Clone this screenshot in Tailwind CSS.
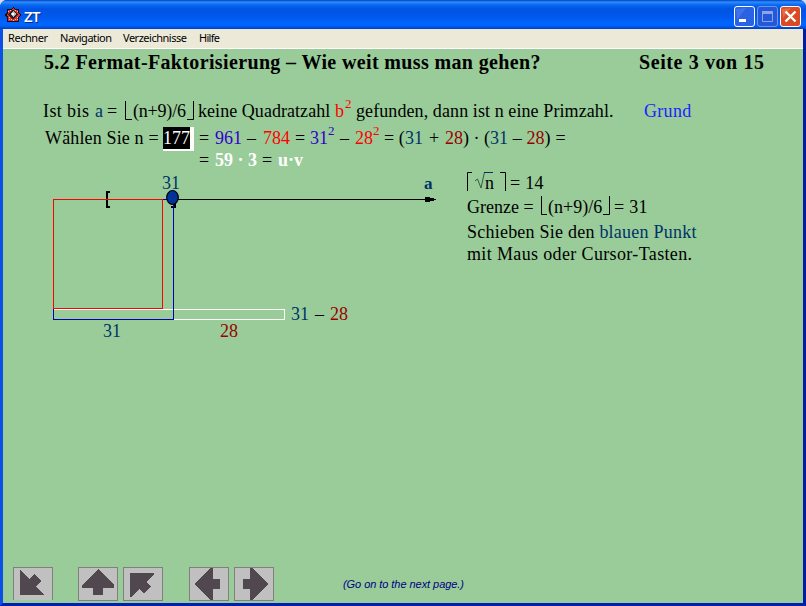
<!DOCTYPE html>
<html lang="de">
<head>
<meta charset="utf-8">
<title>ZT</title>
<script src="https://cdn.jsdelivr.net/npm/@tailwindcss/browser@4"></script>
</head>
<body class="bg-[#d5dcf0]">
<div class="w-[806px] h-[606px] flex flex-col overflow-hidden rounded-t-[7px] bg-[#0044dd]">
  <header class="h-[29px] shrink-0 flex items-center pl-[5px] pr-[5px] bg-[linear-gradient(#0040bd_0px,#2f8cff_2px,#0868f0_5px,#0054e3_9px,#0058ec_17px,#0066ff_23px,#0061f5_26px,#003dc5_29px)]">
    <svg class="w-[16px] h-[16px]" viewBox="0 0 16 16" shape-rendering="crispEdges">
      <path d="M8 0L10 2H14V5L16 8L14 11V15H2V11L0 8L2 5V2H6Z" fill="#111"/>
      <path d="M8 1L10 3H13V6L15 8L13 10V14H3V10L1 8L3 6V3H6Z" fill="#e22b24"/>
      <path d="M5 3h1v1h-1zM10 3h1v1h-1zM4 10h1v1h-1zM6 12h1v1h-1zM10 12h1v1h-1zM12 10h1v1h-1zM8 13h1v1h-1zM4 12h1v1h-1zM12 12h1v1h-1zM3 4h1v1h-1zM12 4h1v1h-1z" fill="#fbb"/>
      <path d="M8 2L13 7.500L8 12L3 7.500Z" fill="#222"/><path d="M8 4L11 7L8 10L5 7Z" fill="#bbb"/><path d="M7 6h2v2H7z" fill="#fff"/>
    </svg>
    <span class="ml-[3px] mt-[3px] text-white font-semibold text-[15px] leading-[16px] tracking-[-0.6px] font-['Open_Sans',sans-serif] [text-shadow:1px_1px_#0a2a88]">ZT</span>
    <div class="ml-auto mt-[3px] flex gap-[2px]">
      <svg class="w-[21px] h-[21px]" viewBox="0 0 21 21"><rect x=".5" y=".5" width="20" height="20" rx="2.500" fill="#2a62e4" stroke="#fff"/><path d="M2 3L12 2L3 14Z" fill="#6d96f2" opacity=".35"/><path d="M5 13h7v3H5z" fill="#fff"/></svg>
      <svg class="w-[21px] h-[21px]" viewBox="0 0 21 21"><rect x=".5" y=".5" width="20" height="20" rx="2.500" fill="#2458d8" stroke="#6e95ed"/><path d="M5.500 6v9.500h10V6" fill="none" stroke="#8ba3e7"/><path d="M5 5h11v3H5z" fill="#8ba3e7"/></svg>
      <svg class="w-[21px] h-[21px]" viewBox="0 0 21 21"><rect x=".5" y=".5" width="20" height="20" rx="2.500" fill="#dc4a21" stroke="#fff"/><path d="M2 3L11 2L3 12Z" fill="#f29a80" opacity=".4"/><path d="M5.500 5.500L15.500 15.500M15.500 5.500L5.500 15.500" stroke="#fff" stroke-width="2.400"/></svg>
    </div>
  </header>
  <div class="flex-1 flex flex-col min-h-0 border-x-[3px] border-b-[3px] border-l-[#0c50e8] border-r-[#001ea0] border-b-[#0020b0]">
    <nav class="h-[20px] shrink-0 flex items-center bg-[#ece9d8] border-b border-white text-black text-[11px] leading-[14px] font-['Noto_Sans',sans-serif] whitespace-nowrap pl-[5px]">
      <span class="w-[52px]"><svg class="block h-[18px] w-[52px] overflow-visible"><text y="12" textLength="40">Rechner</text></svg></span>
      <span class="w-[63px]"><svg class="block h-[18px] w-[63px] overflow-visible"><text y="12" textLength="52">Navigation</text></svg></span>
      <span class="w-[76px]"><svg class="block h-[18px] w-[76px] overflow-visible"><text y="12" textLength="64">Verzeichnisse</text></svg></span>
      <span><svg class="block h-[18px] w-[30px] overflow-visible"><text y="12" textLength="21">Hilfe</text></svg></span>
    </nav>
    <main class="flex-1 min-h-0 flex flex-col bg-[#99cc99] text-black text-[18px] leading-[22px] font-['Liberation_Serif',serif] whitespace-pre">
      <h1 class="flex h-[26px] pt-[2px] pl-[41px] text-[20px] font-bold"><span class="w-[595px] tracking-[0.36px]">5.2 Fermat-Faktorisierung – Wie weit muss man gehen?</span><span class="tracking-[0.6px]">Seite 3 von 15</span></h1>
      <p class="flex mt-[25px] h-[27px] pl-[40px]"><span class="w-[52px] tracking-[0.4px]">Ist bis </span><span class="w-[12px] text-[#003366]">a</span><span class="w-[17px]">=</span><svg class="w-[9px] h-[22px]" viewBox="0 0 9 22"><path d="M-.5 1V19.500H6" fill="none" stroke="#000" transform="translate(2)"/></svg><span class="w-[54px] tracking-[-0.2px]">(n+9)/6</span><svg class="w-[11px] h-[22px]" viewBox="0 0 11 22"><path d="M6.500 1V19.500H0" fill="none" stroke="#000"/></svg><span class="w-[137px] tracking-[0.05px]">keine Quadratzahl</span><span class="w-[10px] text-[#f00]">b</span><span class="w-[11px] text-[#f00] text-[13px] relative -top-[7px]">2</span><span class="w-[288px] tracking-[0.09px]">gefunden, dann ist n eine Primzahl.</span><span class="text-[#2222ff] tracking-[0.3px]">Grund</span></p>
      <div class="flex h-[22px] pl-[42px]">
        <span class="w-[118px] tracking-[0.15px]">Wählen Sie n =</span>
        <span class="block w-[31px] h-[24px] bg-white pr-[4px] pb-[2px] mr-[5px]"><span class="block h-[22px] w-[27px] bg-black text-white">177</span></span>
        <span class="w-[16px]">=</span><span class="w-[32px] text-[#3300cc]">961</span><span class="w-[16px]">–</span><span class="w-[32px] text-[#f00]">784</span><span class="w-[15px]">=</span><span class="w-[18px] text-[#3300cc]">31</span><span class="w-[12px] text-[13px] text-[#3300cc] relative -top-[7px]">2</span><span class="w-[15px]">–</span><span class="w-[18px] text-[#f00]">28</span><span class="w-[11px] text-[13px] text-[#f00] relative -top-[7px]">2</span><span class="w-[21px]">= (</span><span class="w-[18px] text-[#003366]">31</span><span class="w-[22px] text-center">+</span><span class="text-[#990000]">28</span><span>) · (</span><span class="text-[#003366]">31</span><span class="tracking-[0.2px]"> – </span><span class="text-[#990000]">28</span><span class="tracking-[0.2px]">) =</span>
      </div>
      <p class="flex h-[23px] pl-[196px]"><span class="w-[16px]">=</span><b class="text-white w-[47px]">59 · 3</b><span class="w-[16px]">=</span><b class="text-white">u·v</b></p>
      <section class="flex h-[180px]">
        <svg class="w-[464px] h-[180px] shrink-0" viewBox="3 172 464 180" font-family="Liberation Serif" font-size="18">
          <g fill="none" shape-rendering="crispEdges">
            <path d="M53.500 199.500H426" stroke="#000"/>
            <path d="M110 191.500H107V206.500H110M171 206.500H174.500V200" stroke="#000" stroke-width="2"/>
            <rect x="53.500" y="309.500" width="231" height="10" stroke="#fff"/>
            <rect x="53.500" y="199.500" width="120" height="120" stroke="#0000b4"/>
            <rect x="53.500" y="199.500" width="109" height="109" stroke="#f00"/>
          </g>
          <path d="M425 197h5v1h4v1h2v1h-2v1h-4v1h-5z" fill="#000"/>
          <ellipse cx="172.500" cy="197.500" rx="5.800" ry="7" fill="#003399" stroke="#000" stroke-width="1.200"/>
          <g fill="#003366">
            <text x="162" y="189">31</text><text x="424" y="189" font-weight="bold" font-size="17">a</text><text x="103" y="337">31</text><text x="291" y="320">31</text>
          </g>
          <text x="315" y="320">–</text>
          <g fill="#990000"><text x="330" y="320">28</text><text x="220" y="337">28</text></g>
        </svg>
        <div class="flex flex-col">
          <p class="flex h-[24px]"><svg class="w-[43px] h-[22px]" viewBox="0 0 43 22"><path d="M.5 19V0.500H5M33 0.500H38.500V19" fill="none" stroke="#000"/><path d="M8 9L10.500 7L14 16L17.500 0" fill="none" stroke="#345b45"/><path d="M17 .5H26" stroke="#003366"/><text x="18" y="17" font-size="18">n</text></svg><span class="tracking-[0.3px]">= 14</span></p>
          <p class="flex h-[25px]"><span class="w-[73px]">Grenze =</span><svg class="w-[8px] h-[22px]" viewBox="0 0 8 22"><path d="M1.500 0V18.500H7" fill="none" stroke="#000"/></svg><span class="w-[55px]">(n+9)/6</span><svg class="w-[11px] h-[22px]" viewBox="0 0 11 22"><path d="M6.500 0V18.500H0" fill="none" stroke="#000"/></svg><span class="tracking-[0.3px]">= 31</span></p>
          <p class="h-[22px] tracking-[0.23px]">Schieben Sie den <span class="text-[#003366]">blauen Punkt</span></p>
          <p class="tracking-[0.36px]">mit Maus oder Cursor-Tasten.</p>
        </div>
      </section>
      <footer class="mt-auto h-[36px] flex items-start pl-[10px]">
        <button class="block mr-[25px]"><svg class="block w-[40px] h-[34px]" viewBox="0 0 40 34" shape-rendering="crispEdges"><path d="M0 0h40v33H0z" fill="#c0c0c0"/><path d="M.5 33V.5H39.500V33" fill="none" stroke="#808080"/><path d="M7 3L16 12L21 7L28 14L23 19L31 28H7Z" fill="#50484e"/></svg></button>
        <button class="mr-[5px]"><svg class="block w-[40px] h-[34px]" viewBox="0 0 40 34" shape-rendering="crispEdges"><path d="M.5 .5h39v33H.5z" fill="#c0c0c0" stroke="#808080"/><path d="M20 2L36 18V21H25V28H15V21H4V18Z" fill="#50484e"/></svg></button>
        <button class="mr-[26px]"><svg class="block w-[40px] h-[34px]" viewBox="0 0 40 34" shape-rendering="crispEdges"><path d="M.5 .5h39v33H.5z" fill="#c0c0c0" stroke="#808080"/><path d="M7 6H31V7L23 15L28 20L21 26L16 22L8 30H7Z" fill="#50484e"/></svg></button>
        <button class="mr-[5px]"><svg class="block w-[40px] h-[34px]" viewBox="0 0 40 34" shape-rendering="crispEdges"><path d="M.5 .5h39v33H.5z" fill="#c0c0c0" stroke="#808080"/><path d="M21 1H24V12H31V22H24V33H21L6 17Z" fill="#50484e"/></svg></button>
        <button><svg class="block w-[40px] h-[34px]" viewBox="0 0 40 34" shape-rendering="crispEdges"><path d="M.5 .5h39v33H.5z" fill="#c0c0c0" stroke="#808080"/><path d="M19 1H16V12H9V22H16V33H19L34 17Z" fill="#50484e"/></svg></button>
        <svg class="ml-[68px] w-[124px] h-[34px] overflow-visible" font-family="Liberation Sans" font-size="11" font-style="italic"><text x="1" y="21" textLength="121" fill="#000080">(Go on to the next page.)</text></svg>
      </footer>
    </main>
  </div>
</div>
</body>
</html>
